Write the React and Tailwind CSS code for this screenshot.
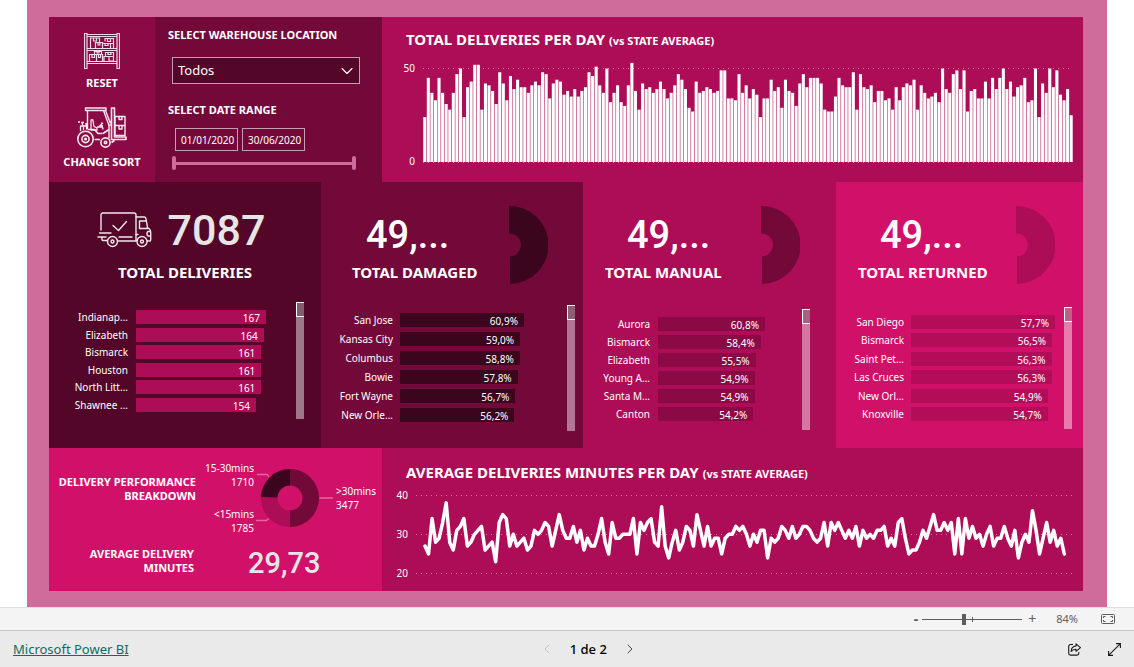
import React, { useState } from "react";
import { ChevronDown, ChevronLeft, ChevronRight } from "lucide-react";

const DELIVERIES = [
  24, 45, 37, 33, 45, 37, 31, 28, 37, 47, 50, 24, 40, 43, 52, 52, 28, 42, 41, 38, 31, 48, 42, 33, 46, 39, 44, 40, 40, 37,
  41, 43, 41, 48, 47, 34, 42, 44, 43, 36, 38, 35, 39, 35, 38, 40, 48, 46, 51, 41, 37, 50, 32, 37, 41, 32, 30, 41, 53, 38,
  28, 42, 39, 40, 37, 39, 43, 39, 34, 37, 41, 47, 44, 39, 29, 27, 43, 37, 38, 40, 39, 37, 38, 49, 49, 34, 34, 33, 47, 37,
  41, 34, 39, 36, 24, 34, 34, 44, 38, 40, 29, 44, 38, 37, 30, 42, 47, 40, 45, 45, 45, 42, 28, 27, 27, 35, 45, 41, 40, 40,
  48, 28, 47, 40, 39, 41, 32, 38, 38, 33, 34, 28, 40, 33, 40, 42, 41, 44, 28, 41, 37, 34, 35, 37, 32, 50, 39, 37, 47, 49,
  39, 49, 27, 38, 39, 34, 34, 43, 34, 45, 39, 45, 50, 39, 43, 35, 40, 41, 45, 32, 33, 50, 24, 42, 37, 50, 40, 49, 36, 33,
  39, 25,
];

const MINUTES = [
  27, 25, 34, 28, 29, 33, 38, 28, 26, 31, 32, 34, 27, 28, 30, 31, 32, 26, 27, 28, 23, 33, 35, 34, 27, 30, 27, 28, 29, 26,
  27, 31, 30, 31, 33, 32, 27, 31, 35, 31, 29, 29, 32, 28, 31, 26, 29, 27, 27, 30, 34, 28, 25, 33, 29, 29, 30, 30, 30, 34,
  25, 33, 31, 33, 34, 28, 27, 37, 27, 24, 28, 31, 26, 28, 32, 31, 27, 35, 31, 27, 32, 27, 29, 29, 25, 29, 30, 30, 32, 31,
  32, 30, 27, 30, 28, 31, 31, 24, 29, 28, 29, 32, 31, 29, 32, 29, 30, 32, 32, 31, 29, 28, 29, 33, 27, 33, 31, 33, 31, 29,
  31, 29, 32, 27, 31, 29, 30, 29, 31, 31, 32, 27, 29, 27, 33, 34, 29, 25, 26, 26, 28, 31, 29, 32, 35, 31, 31, 33, 31, 33,
  25, 34, 25, 34, 29, 32, 29, 30, 27, 30, 32, 27, 29, 29, 32, 29, 27, 31, 24, 28, 30, 28, 36, 31, 25, 29, 33, 28, 31, 27,
  29, 25,
];

const TOP_DELIVERIES = [
  ["Indianap...", "167", 167],
  ["Elizabeth", "164", 164],
  ["Bismarck", "161", 161],
  ["Houston", "161", 161],
  ["North Litt...", "161", 161],
  ["Shawnee ...", "154", 154],
];
const TOP_DAMAGED = [
  ["San Jose", "60,9%", 60.9],
  ["Kansas City", "59,0%", 59],
  ["Columbus", "58,8%", 58.8],
  ["Bowie", "57,8%", 57.8],
  ["Fort Wayne", "56,7%", 56.7],
  ["New Orle...", "56,2%", 56.2],
];
const TOP_MANUAL = [
  ["Aurora", "60,8%", 60.8],
  ["Bismarck", "58,4%", 58.4],
  ["Elizabeth", "55,5%", 55.5],
  ["Young A...", "54,9%", 54.9],
  ["Santa M...", "54,9%", 54.9],
  ["Canton", "54,2%", 54.2],
];
const TOP_RETURNED = [
  ["San Diego", "57,7%", 57.7],
  ["Bismarck", "56,5%", 56.5],
  ["Saint Pet...", "56,3%", 56.3],
  ["Las Cruces", "56,3%", 56.3],
  ["New Orl...", "54,9%", 54.9],
  ["Knoxville", "54,7%", 54.7],
];

function RackIcon() {
  return (
    <svg width="36" height="36" viewBox="0 0 36 36" fill="none" stroke="#f3dbe6" strokeWidth="1.2">
      <path d="M0.5 0.5h2.5v35h-2.5zM33 0.5h2.5v35h-2.5z" />
      <path d="M3 1.5h30M3 3.5h30M3 15.5h30M3 17.5h30M3 28.5h30M3 30.5h30" />
      <path d="M6.5 15V5h9v4M9.5 5v3h3V5M11.5 15V9.5h7V15M14 9.5v2.500h2V9.500M18.500 15v-4.500h8V15M21 8.500V5.500h8.500V15M23.500 5.500v3h3v-3M26.500 10.500h3M21 10.500v2h3v-2" />
      <path d="M5.500 28v-6.500h7V28M8 21.500v3h2.500v-3M10.500 21.500V18.500h7v3M13 18.500v1.500h2v-1.500M12.500 28v-6.500h6V28M14.500 21.500v3h2v-3M20 28v-4.500h5V28M21.500 23.500V19.500h8V28M25 23.500h4.500M24 19.500v2h3v-2M25 28h4.500" />
    </svg>
  );
}

function ForkliftIcon() {
  return (
    <svg width="50" height="41" viewBox="0 0 50 41" fill="none" stroke="#f8e8ef" strokeWidth="1.6" strokeLinejoin="round">
      <path d="M8.500 1h20.500v2.500h-20.500zM10.500 3.500V22M26.500 3.500l5.500 15v13M28.500 3.500l5 13" strokeWidth="1.400" />
      <path d="M1 15h2M4 15.500h3M5.500 15.500v4M3.500 24v-5h5.500v-3M6.500 19v4M9.500 16v6.500" strokeWidth="1.300" />
      <path d="M14 22.500v-9c0-1 2-1 2 0l.8 5.500c.2 1.500 3.200.5 3.200 2.500v1.500h-6zM22 19.500l4-3.500M24.500 15.500l1.500 7M20 20h6" strokeWidth="1.300" />
      <path d="M10.500 22.500h7l3.500 4h4.500M17.500 32.500h5.500M32 22.500l-6 4" />
      <circle cx="8.500" cy="32" r="7.700" />
      <circle cx="8.500" cy="32" r="3.600" />
      <circle cx="8.500" cy="32" r="0.800" />
      <circle cx="28.500" cy="35.500" r="4.600" />
      <circle cx="28.500" cy="35.500" r="1.200" />
      <path d="M34.500 1h3v29h11.500v2.500h-14.500zM32 14.500h2.500M32 18h2.500M34.500 35.500l3-2" />
      <path d="M38 9.500h10v9h-10zM42 9.500v3h3v-3M38 18.500h10v10h-10zM42 18.500v3.500h3v-3.500" strokeWidth="1.400" />
    </svg>
  );
}

function TruckIcon() {
  return (
    <svg width="55" height="36" viewBox="0 0 55 36" fill="none" stroke="#f1e6eb" strokeWidth="1.400" strokeLinecap="round" strokeLinejoin="round">
      <path d="M4 18V3a2 2 0 0 1 2-2h31a2 2 0 0 1 2 2v25M16 13.500l5.500 5 8-9" />
      <path d="M2.500 21h11.500M1 25h8M5 25v2.500a1 1 0 0 0 1 1h4M22 25h13M21.500 29h17.500" />
      <path d="M39 5h8a2 2 0 0 1 2 1.600l1.500 9c2.500 1 3.200 2.600 3.200 5V28a1 1 0 0 1-1 1h-2.500M39 28.500h1.200M39 22.500h2M42.500 16.500V9h6M42.500 16.500h8M53.500 19.500h-2c-2 0-2 4.500 0 4.500h2" />
      <circle cx="15.500" cy="29.500" r="5" />
      <circle cx="15.500" cy="29.500" r="1.500" />
      <circle cx="45" cy="29.500" r="5" />
      <circle cx="45" cy="29.500" r="1.500" />
    </svg>
  );
}

function HalfDonut({ className }) {
  return (
    <svg width="39" height="78" viewBox="0 0 39 78" className={className} fill="currentColor">
      <path d="M0 0A39 39 0 0 1 1 78L1 50.500A11.500 11.500 0 0 0 0 27.500Z" />
    </svg>
  );
}

function BreakdownDonut() {
  return (
    <svg width="77" height="60" viewBox="0 0 77 60" className="shrink-0">
      <path d="M34 1A29 29 0 0 1 34 59L34 42.500A12.500 12.500 0 0 0 34 17.500Z" fill="#720939" />
      <path d="M34 59A29 29 0 0 1 5 29L21.500 29.500A12.500 12.500 0 0 0 34 42.500Z" fill="#ad0c56" />
      <path d="M5 29A29 29 0 0 1 34 1L34 17.500A12.500 12.500 0 0 0 21.500 29.500Z" fill="#3b051e" />
      <path d="M1 6.500h10l2 2M0 52.500h10.500l2-2M63.500 30H77" fill="none" stroke="#e467a0" strokeWidth="1.300" />
    </svg>
  );
}

function DeliveriesChart() {
  return (
    <svg className="h-[104px] min-w-0 flex-1" viewBox="0 0 182 104" preserveAspectRatio="none" role="img" aria-label="Total deliveries per day">
      <path d="M0 8.500H182" stroke="#cf78a0" strokeWidth="1" strokeDasharray="1 4" vectorEffect="non-scaling-stroke" />
      {DELIVERIES.map((v, i) => (
        <rect key={i} x={i + 0.06} y={102 - v * 1.870} width="0.860" height={v * 1.870} fill="#fff" />
      ))}
      <path d="M0 102.500H182" stroke="#cf78a0" strokeWidth="1" strokeDasharray="1 4" vectorEffect="non-scaling-stroke" />
    </svg>
  );
}

function MinutesChart() {
  const points = MINUTES.map((v, i) => `${9 + i * 3.532},${8 + (40 - v) * 3.930}`).join(" ");
  return (
    <svg className="h-[94px] min-w-0 flex-1" viewBox="0 0 656 94" preserveAspectRatio="none" role="img" aria-label="Average delivery minutes per day">
      <path d="M0 8.500H656M0 47.500H656M0 86.500H656" stroke="#cf78a0" strokeWidth="1" strokeDasharray="1 4" vectorEffect="non-scaling-stroke" />
      <polyline points={points} fill="none" stroke="#fff" strokeWidth="3.500" strokeLinejoin="round" strokeLinecap="round" vectorEffect="non-scaling-stroke" />
    </svg>
  );
}

function BarList({ items, className, labelClass, barClass, scrollClass }) {
  const max = items[0][2];
  return (
    <div className="flex">
      <ul className={"flex min-w-0 flex-1 flex-col justify-between " + className}>
        {items.map(([name, text, value]) => (
          <li key={name} className="flex items-center text-[10px] leading-[14px]">
            <span className={"shrink-0 text-right whitespace-nowrap " + labelClass}>{name}</span>
            <span className="min-w-0 flex-1">
              <span className={"block h-[14px] pt-px pr-[6px] text-right " + barClass} style={{ width: `${(value / max) * 100}%` }}>
                {text}
              </span>
            </span>
          </li>
        ))}
      </ul>
      <div className={"w-2 shrink-0 bg-white/45 " + scrollClass}>
        <div className="h-[15px] border border-r-0 border-white bg-black/20" />
      </div>
    </div>
  );
}

function KpiPanel({ className, value, title, headClass, valueClass, donutClass, children }) {
  return (
    <section className={"flex flex-col " + className}>
      <div className={"flex h-[118px] justify-between " + headClass}>
        <div className="flex flex-col justify-end">
          <p className={"font-[Roboto,sans-serif] text-[38px] leading-[46px] font-medium " + valueClass}>{value}</p>
          <h2 className="mt-1 mb-[18px] text-[15px] leading-5 font-bold whitespace-nowrap">{title}</h2>
        </div>
        <HalfDonut className={"mt-6 shrink-0 " + donutClass} />
      </div>
      {children}
    </section>
  );
}

function App() {
  const [from, setFrom] = useState("01/01/2020");
  const [to, setTo] = useState("30/06/2020");
  const rangeInput =
    "pointer-events-none absolute inset-0 m-0 h-4 w-full appearance-none bg-transparent [&::-webkit-slider-thumb]:pointer-events-auto [&::-webkit-slider-thumb]:h-[14px] [&::-webkit-slider-thumb]:w-1 [&::-webkit-slider-thumb]:appearance-none [&::-webkit-slider-thumb]:rounded-[2px] [&::-webkit-slider-thumb]:bg-[#d06c9b]";
  const dateInput = "h-[23px] w-[63px] border border-[#c79bb0] bg-transparent pl-[5px] text-[10px] text-white outline-none";
  return (
    <div className="flex min-h-screen flex-col bg-white font-['Noto_Sans','Open_Sans',sans-serif] text-white">
      <main className="mx-[27px] flex-1 bg-[#d06c9b] pt-[17px] pr-6 pb-4 pl-[22px]">
        <div className="flex h-[165px]">
          <div className="flex w-[106px] shrink-0 flex-col items-center bg-[#8b0a45] pt-4">
            <button type="button" className="flex flex-col items-center text-[11px] leading-4 font-bold">
              <RackIcon />
              <span className="mt-[6px]">RESET</span>
            </button>
            <button type="button" className="mt-4 flex flex-col items-center text-[11px] leading-4 font-bold whitespace-nowrap">
              <ForkliftIcon />
              <span className="mt-[6px]">CHANGE SORT</span>
            </button>
          </div>
          <div className="flex w-[227px] shrink-0 flex-col bg-[#720939] pt-[10px] pr-[22px] pl-[13px]">
            <label htmlFor="location" className="text-[11px] leading-4 font-bold whitespace-nowrap">
              SELECT WAREHOUSE LOCATION
            </label>
            <div className="relative mt-[14px] ml-1">
              <select id="location" className="h-[27px] w-full appearance-none border border-[#c79bb0] bg-[#530628] pl-[5px] text-[13px] text-white">
                <option>Todos</option>
              </select>
              <ChevronDown className="pointer-events-none absolute top-1 right-[3px] size-5" strokeWidth={1.3} />
            </div>
            <h2 className="mt-[18px] text-[11px] leading-4 font-bold">SELECT DATE RANGE</h2>
            <div className="mt-[10px] ml-[7px] flex gap-1">
              <input aria-label="Start date" className={dateInput} value={from} onChange={(e) => setFrom(e.target.value)} />
              <input aria-label="End date" className={dateInput} value={to} onChange={(e) => setTo(e.target.value)} />
            </div>
            <div className="relative mt-1 ml-1 h-4 w-[184px]">
              <span className="absolute inset-x-1 top-[7px] h-[3px] bg-[#d06c9b]" />
              <input type="range" aria-label="Range start" className={rangeInput} min="0" max="181" defaultValue="0" />
              <input type="range" aria-label="Range end" className={rangeInput} min="0" max="181" defaultValue="181" />
            </div>
          </div>
          <section className="min-w-0 flex-1 bg-[#ad0c56] pt-[10px]">
            <h2 className="pl-6 text-[15px] leading-6 font-bold whitespace-nowrap">
              TOTAL DELIVERIES PER DAY <span className="text-[11px]">(vs STATE AVERAGE)</span>
            </h2>
            <div className="mt-[7px] flex gap-2 pr-[10px]">
              <div className="flex h-[109px] w-[33px] flex-col justify-between text-right text-[10px] leading-4">
                <span>50</span>
                <span>0</span>
              </div>
              <DeliveriesChart />
            </div>
          </section>
        </div>

        <div className="grid h-[266px] grid-cols-[272fr_262fr_253fr_247fr]">
          <section className="flex flex-col bg-[#530628]">
            <div className="flex h-[118px] flex-col items-center justify-end">
              <div className="flex items-center gap-4 pr-2">
                <TruckIcon />
                <p className="font-[Roboto,sans-serif] text-[43px] leading-[52px] font-medium text-[#e6e6e6]">7087</p>
              </div>
              <h2 className="mt-[6px] mb-[18px] text-[15px] leading-5 font-bold">TOTAL DELIVERIES</h2>
            </div>
            <BarList items={TOP_DELIVERIES} className="mt-[10px] h-[102px]" labelClass="w-[79px] mr-2" barClass="bg-[#ad0c56]" scrollClass="ml-[30px] mr-[17px] mt-[2px] h-[117px]" />
          </section>
          <KpiPanel className="bg-[#720939]" value="49,..." title="TOTAL DAMAGED" headClass="pl-[31px] pr-[35px]" valueClass="pl-[14px]" donutClass="text-[#3b051e]">
            <BarList items={TOP_DAMAGED} className="mt-[13px] h-[109px]" labelClass="w-[72px] mr-[7px]" barClass="bg-[#3b051e]" scrollClass="ml-[43px] mr-2 mt-[5px] h-[126px]" />
          </KpiPanel>
          <KpiPanel className="bg-[#ad0c56]" value="49,..." title="TOTAL MANUAL" headClass="pl-[22px] pr-[36px]" valueClass="pl-[22px]" donutClass="text-[#720939]">
            <BarList items={TOP_MANUAL} className="mt-[17px] h-[104px]" labelClass="w-[67px] mr-2" barClass="bg-[#8b0a45]" scrollClass="ml-[37px] mr-[26px] mt-[9px] h-[121px]" />
          </KpiPanel>
          <KpiPanel className="bg-[#d11069]" value="49,..." title="TOTAL RETURNED" headClass="pl-[22px] pr-[28px]" valueClass="pl-[22px]" donutClass="text-[#ad0c56]">
            <BarList items={TOP_RETURNED} className="mt-[15px] h-[106px]" labelClass="w-[68px] mr-[7px]" barClass="bg-[#b20d59]" scrollClass="ml-[9px] mr-[11px] mt-[7px] h-[122px]" />
          </KpiPanel>
        </div>

        <div className="flex h-[143px]">
          <section className="w-[333px] shrink-0 bg-[#d11069]">
            <div className="flex pt-[13px]">
              <h2 className="w-[147px] shrink-0 pt-[14px] text-right text-[11px] leading-[14px] font-bold">
                DELIVERY PERFORMANCE BREAKDOWN
              </h2>
              <dl className="flex h-[74px] w-[58px] flex-col justify-between text-right text-[10px] leading-[14px]">
                <div>
                  <dt>15-30mins</dt>
                  <dd>1710</dd>
                </div>
                <div>
                  <dt>&lt;15mins</dt>
                  <dd>1785</dd>
                </div>
              </dl>
              <div className="flex items-center gap-[3px] pl-[2px]">
                <BreakdownDonut />
                <dl className="text-[10px] leading-[14px]">
                  <dt>&gt;30mins</dt>
                  <dd>3477</dd>
                </dl>
              </div>
            </div>
            <div className="mt-[10px] flex items-center">
              <h2 className="w-[145px] shrink-0 pb-1 pl-8 text-right text-[11px] leading-[14px] font-bold">AVERAGE DELIVERY MINUTES</h2>
              <p className="pl-[54px] font-[Roboto,sans-serif] text-[29px] leading-9 font-medium text-[#e6e6e6]">29,73</p>
            </div>
          </section>
          <section className="min-w-0 flex-1 bg-[#ad0c56] pt-3">
            <h2 className="pl-6 text-[15px] leading-6 font-bold whitespace-nowrap">
              AVERAGE DELIVERIES MINUTES PER DAY <span className="text-[11px]">(vs STATE AVERAGE)</span>
            </h2>
            <div className="mt-px flex gap-2 pr-[11px]">
              <div className="flex h-[94px] w-[26px] flex-col justify-between text-right text-[10px] leading-4">
                <span>40</span>
                <span>30</span>
                <span>20</span>
              </div>
              <MinutesChart />
            </div>
          </section>
        </div>
      </main>

      <div className="flex h-[23px] items-center justify-end border-t border-[#e1dfdd] bg-[#f4f4f4] pr-[19px] text-[#605e5c]">
        <button type="button" aria-label="Zoom out" className="text-[14px] leading-4 font-bold">
          -
        </button>
        <div className="relative ml-1 flex w-[100px] items-center">
          <span className="absolute inset-x-0 top-1/2 h-px bg-[#605e5c]" />
          <span className="absolute left-1/2 h-[5px] w-px bg-[#605e5c]" />
          <input
            type="range"
            aria-label="Zoom"
            min="0"
            max="100"
            defaultValue="41"
            className="relative m-0 h-4 w-full appearance-none bg-transparent [&::-webkit-slider-thumb]:h-[11px] [&::-webkit-slider-thumb]:w-1 [&::-webkit-slider-thumb]:appearance-none [&::-webkit-slider-thumb]:bg-[#605e5c]"
          />
        </div>
        <button type="button" aria-label="Zoom in" className="ml-[6px] text-[14px] leading-4">
          +
        </button>
        <span className="ml-5 text-[11px]">84%</span>
        <button type="button" aria-label="Fit to page" className="ml-[23px]">
          <svg width="14" height="10" viewBox="0 0 14 10" fill="none" stroke="#605e5c" strokeWidth="1">
            <rect x="0.500" y="0.500" width="13" height="9" rx="1" />
            <path d="M2.500 4V2.500H4.500M9.500 2.500h2V4M11.500 6v1.500h-2M4.500 7.500h-2V6" />
          </svg>
        </button>
      </div>

      <footer className="flex h-[37px] items-center justify-between border-t border-[#c8c6c4] bg-[#eaeaea] px-[13px] text-black">
        <a href="#powerbi" className="text-[13px] leading-6 text-[#0f6b63] underline">
          Microsoft Power BI
        </a>
        <nav className="flex items-center gap-[15px]">
          <button type="button" aria-label="Previous page" disabled className="text-[#c8c6c4]">
            <ChevronLeft className="size-4" strokeWidth={1.5} />
          </button>
          <span className="text-[13px] leading-5 font-medium">1 de 2</span>
          <button type="button" aria-label="Next page" className="text-[#484644]">
            <ChevronRight className="size-4" strokeWidth={1.5} />
          </button>
        </nav>
        <div className="flex items-center gap-[27px] pl-5">
          <button type="button" aria-label="Share">
            <svg width="13" height="13" viewBox="0 0 13 13" fill="none" stroke="#1b1a19" strokeWidth="1.100" strokeLinejoin="round">
              <path d="M5 1.500H2.500a1.800 1.800 0 0 0-1.800 1.800v7a1.800 1.800 0 0 0 1.800 1.800h6.500a1.800 1.800 0 0 0 1.800-1.800V9" />
              <path d="M8 .8l4.500 3.800L8 8.300V6.200C5.500 6.200 4.200 7 3.200 8.500c0-3.200 1.800-5.300 4.800-5.500z" />
            </svg>
          </button>
          <button type="button" aria-label="Full screen">
            <svg width="13" height="13" viewBox="0 0 13 13" fill="none" stroke="#1b1a19" strokeWidth="1.100">
              <path d="M8 .6h4.400V5M12.400 .6L.6 12.400M.6 8v4.400H5" />
            </svg>
          </button>
        </div>
      </footer>
    </div>
  );
}

export default App;
